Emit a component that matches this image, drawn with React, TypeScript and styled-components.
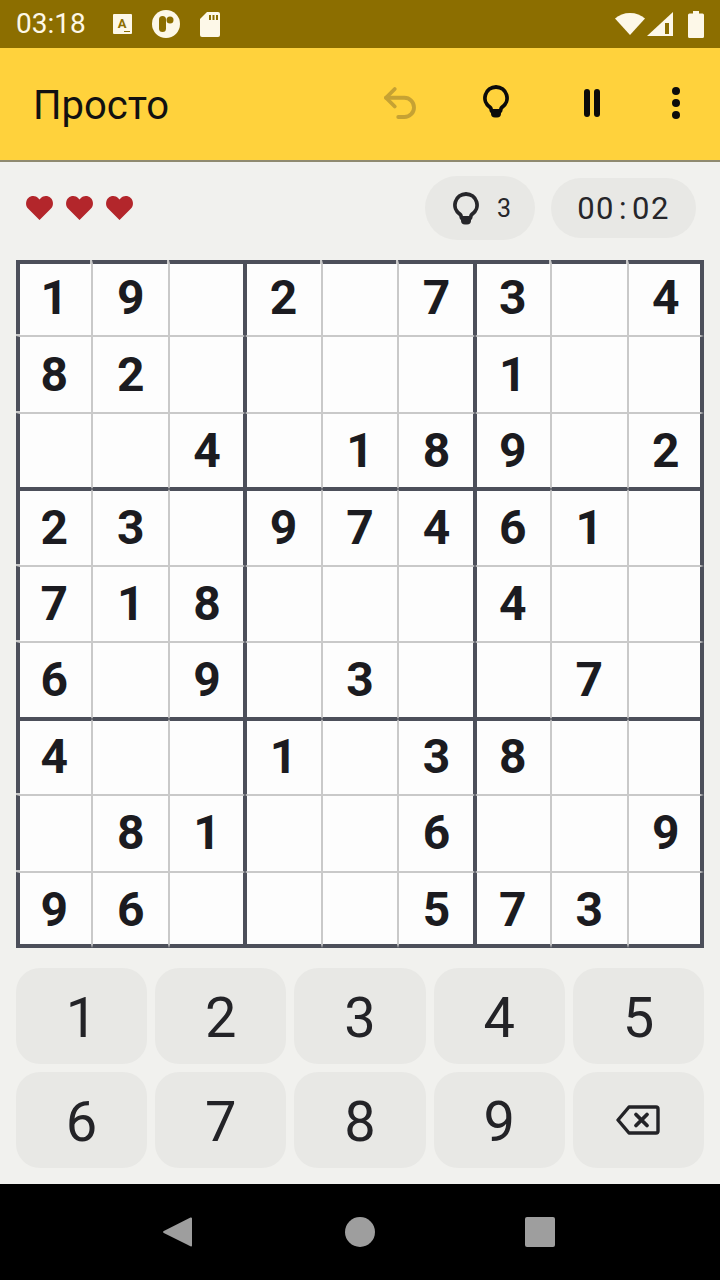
import React from "react";
import styled, { createGlobalStyle, css } from "styled-components";
import { Undo2 } from "lucide-react";

const GlobalStyle = createGlobalStyle`
  html, body {
    margin: 0;
    padding: 0;
    background: #f1f1ee;
  }
  * {
    box-sizing: border-box;
  }
`;

const Screen = styled.div`
  width: 720px;
  height: 1280px;
  display: flex;
  flex-direction: column;
  overflow: hidden;
  background: #f1f1ee;
  font-family: Roboto, "Liberation Sans", sans-serif;
  color: #202024;
`;

const StatusBar = styled.div`
  height: 48px;
  flex: none;
  display: flex;
  align-items: center;
  padding: 0 16px;
  gap: 20px;
  background: #8c6e00;
`;

const Clock = styled.span`
  font-size: 28px;
  line-height: 1;
  color: #fdf8e8;
  margin-right: 7px;
`;

const StatusRight = styled.div`
  margin-left: auto;
  display: flex;
  align-items: center;
  gap: 2px;
`;

const Battery = styled.svg`
  margin-left: 13px;
`;

const AppBar = styled.header`
  height: 114px;
  flex: none;
  display: flex;
  align-items: center;
  padding: 0 8px 2px 33px;
  background: #ffd23c;
  border-bottom: 2px solid #8f8a70;
`;

const Title = styled.h1`
  margin: 4px auto 0 0;
  font-size: 40px;
  font-weight: 400;
  color: #111;
`;

const ActionButton = styled.button<{ $narrow?: boolean }>`
  width: ${(p) => (p.$narrow ? 72 : 96)}px;
  height: 96px;
  padding: 0;
  border: 0;
  background: none;
  display: flex;
  align-items: center;
  justify-content: center;
  color: #0b0b0b;
`;

const UndoIcon = styled(Undo2)`
  color: #c6a233;
`;

const BulbSlot = styled.span`
  display: flex;
  margin-bottom: 4px;
`;

const InfoRow = styled.div`
  flex: none;
  height: 98px;
  display: flex;
  align-items: center;
  padding: 0 24px 6px 26px;
`;

const Hearts = styled.div`
  display: flex;
  gap: 13px;
  margin-right: auto;
`;

const Pill = styled.div<{ $hint?: boolean }>`
  height: ${(p) => (p.$hint ? 64 : 60)}px;
  width: ${(p) => (p.$hint ? 110 : 145)}px;
  margin-left: ${(p) => (p.$hint ? 0 : 16)}px;
  padding-left: ${(p) => (p.$hint ? 4 : 0)}px;
  border-radius: 32px;
  background: #e8e8e5;
  display: flex;
  align-items: center;
  justify-content: center;
  color: #26262a;
`;

const HintCount = styled.span`
  font-size: 25px;
  margin-left: 18px;
`;

const Timer = styled.span`
  font-size: 31px;
  letter-spacing: 1.5px;
`;

const Colon = styled.span`
  margin: 0 4px;
`;

const Board = styled.div`
  flex: none;
  width: 688px;
  height: 688px;
  margin: 0 16px;
  display: grid;
  grid-template-columns: repeat(9, 1fr);
  grid-template-rows: repeat(9, 1fr);
  background: #fdfdfd;
`;

const THICK = "#4c4f5a";
const THIN = "#c9c9c9";

const startWidth = (i: number) => (i === 0 ? 4 : i % 3 === 0 ? 2 : 1);
const endWidth = (i: number) => (i === 8 ? 4 : i % 3 === 2 ? 2 : 1);
const line = (width: number) => `${width}px solid ${width === 1 ? THIN : THICK}`;

// keeps the digit centred in the cell when its two opposite borders differ
const startPad = (i: number) => Math.max(0, endWidth(i) - startWidth(i));
const endPad = (i: number) => Math.max(0, startWidth(i) - endWidth(i));

const Cell = styled.div<{ $row: number; $col: number }>`
  position: relative;
  display: flex;
  align-items: center;
  justify-content: center;
  min-width: 0;
  min-height: 0;
  font-size: 48px;
  font-weight: 700;
  line-height: 1;
  color: #1b1b20;
  border-top: ${(p) => line(startWidth(p.$row))};
  border-bottom: ${(p) => line(endWidth(p.$row))};
  border-left: ${(p) => line(startWidth(p.$col))};
  border-right: ${(p) => line(endWidth(p.$col))};
  padding: ${(p) => startPad(p.$row)}px ${(p) => endPad(p.$col)}px ${(p) => endPad(p.$row)}px ${(p) => startPad(p.$col)}px;

  ${(p) =>
    p.$row === 0 &&
    p.$col % 3 !== 2 &&
    css`
      &::after {
        content: "";
        position: absolute;
        top: -4px;
        right: -1px;
        width: 2px;
        height: 4px;
        background: ${THIN};
      }
    `}

  ${(p) =>
    p.$col === 0 &&
    p.$row % 3 !== 2 &&
    css`
      &::before {
        content: "";
        position: absolute;
        left: -4px;
        bottom: -1px;
        width: 4px;
        height: 2px;
        background: ${THIN};
      }
    `}
`;

const Keypad = styled.div`
  flex: none;
  display: grid;
  grid-template-columns: repeat(5, 1fr);
  grid-auto-rows: 96px;
  gap: 8px;
  padding: 20px 16px 16px;
`;

const Key = styled.button<{ $icon?: boolean }>`
  border: 0;
  padding: ${(p) => (p.$icon ? 0 : "4px 0 0")};
  border-radius: 24px;
  background: #e8e8e5;
  display: flex;
  align-items: center;
  justify-content: center;
  font-family: inherit;
  font-size: 56px;
  font-weight: 400;
  color: #232327;
`;

const NavBar = styled.nav`
  flex: 1;
  background: #000;
  display: flex;
  align-items: center;
  justify-content: center;
  gap: 150px;
  padding-right: 2px;
`;

const NavCircle = styled.div`
  width: 30px;
  height: 30px;
  border-radius: 50%;
  background: #9e9e9e;
`;

const NavSquare = styled.div`
  width: 30px;
  height: 30px;
  border-radius: 2px;
  background: #9e9e9e;
`;

const Bulb = () => (
  <svg width="26" height="33" viewBox="0 0 26 33">
    <path
      d="M13 2a11 11 0 0 1 6.2 20.1c-.8.6-1.2 1.4-1.4 2.4l-.3 1.5h-9l-.3-1.500c-.2-1-.6-1.800-1.400-2.400A11 11 0 0 1 13 2z"
      fill="none"
      stroke="currentColor"
      strokeWidth="3.8"
      strokeLinejoin="round"
    />
    <path d="M8 25h10v3.500a4 4 0 0 1-4 4h-2a4 4 0 0 1-4-4z" fill="currentColor" />
  </svg>
);

const Heart = () => (
  <svg width="27" height="24" viewBox="0 0 27 24">
    <path
      d="M13.500 24 2 12.600C-.7 9.700-.6 4.600 2.300 2 5.200-.6 9.700-.5 12.300 2.200l1.200 1.300 1.200-1.300C17.300-.5 21.800-.6 24.700 2c2.900 2.600 3 7.700.3 10.600z"
      fill="#b3262b"
    />
  </svg>
);

const rows = [
  "19 2 73 4",
  "82    1  ",
  "  4 189 2",
  "23 97461 ",
  "718   4  ",
  "6 9 3  7 ",
  "4  1 38  ",
  " 81  6  9",
  "96   573 ",
];

const App = () => {
  return (
    <Screen>
      <GlobalStyle />
      <StatusBar>
        <Clock>03:18</Clock>
        <svg width="19" height="20" viewBox="0 0 19 20">
          <rect width="19" height="20" rx="1" fill="#fdf8e8" />
          <text x="9" y="14" fontSize="13" fontWeight="700" fontFamily="Roboto, sans-serif" textAnchor="middle" fill="#8c6e00">
            A
          </text>
          <rect x="11" y="17" width="6" height="1" fill="#8c6e00" />
        </svg>
        <svg width="28" height="28" viewBox="0 0 28 28">
          <circle cx="14" cy="14" r="14" fill="#fdf8e8" />
          <rect x="7" y="6" width="7" height="16" rx="3.500" fill="#8c6e00" />
          <circle cx="18" cy="10" r="3.500" fill="#8c6e00" />
        </svg>
        <svg width="20" height="25" viewBox="0 0 20 25">
          <path d="M7 0h11a2 2 0 0 1 2 2v21a2 2 0 0 1-2 2H2a2 2 0 0 1-2-2V7z" fill="#fdf8e8" />
          <path d="M9 3h2v5H9zM12.500 3h2v5h-2zM16 3h2v5h-2z" fill="#8c6e00" />
        </svg>
        <StatusRight>
          <svg width="30" height="24" viewBox="0 0 30 24">
            <path d="M15 23 0 6.500C4 3 9 1 15 1s11 2 15 5.500z" fill="#fdf8e8" />
          </svg>
          <svg width="26" height="24" viewBox="0 0 26 24">
            <path d="M0 24 26 0v24z" fill="#fdf8e8" />
            <path d="M18 11h4v11h-4z" fill="#8c6e00" />
          </svg>
          <Battery width="16" height="27" viewBox="0 0 16 27">
            <path d="M5 0h6v2.500h3.500a1.500 1.500 0 0 1 1.500 1.500v21.500a1.500 1.500 0 0 1-1.500 1.500h-13A1.500 1.500 0 0 1 0 25.500V4a1.500 1.500 0 0 1 1.500-1.500H5z" fill="#fdf8e8" />
          </Battery>
        </StatusRight>
      </StatusBar>

      <AppBar>
        <Title>Просто</Title>
        <ActionButton>
          <UndoIcon size={42} strokeWidth={2.2} />
        </ActionButton>
        <ActionButton>
          <BulbSlot>
            <Bulb />
          </BulbSlot>
        </ActionButton>
        <ActionButton>
          <svg width="16" height="28" viewBox="0 0 16 28">
            <rect width="6" height="28" rx="3" fill="currentColor" />
            <rect x="10" width="6" height="28" rx="3" fill="currentColor" />
          </svg>
        </ActionButton>
        <ActionButton $narrow>
          <svg width="8" height="32" viewBox="0 0 8 32">
            <circle cx="4" cy="4" r="4" fill="currentColor" />
            <circle cx="4" cy="16" r="4" fill="currentColor" />
            <circle cx="4" cy="28" r="4" fill="currentColor" />
          </svg>
        </ActionButton>
      </AppBar>

      <InfoRow>
        <Hearts>
          <Heart />
          <Heart />
          <Heart />
        </Hearts>
        <Pill $hint>
          <Bulb />
          <HintCount>3</HintCount>
        </Pill>
        <Pill>
          <Timer>
            00<Colon>:</Colon>02
          </Timer>
        </Pill>
      </InfoRow>

      <Board>
        {rows.map((row, r) =>
          row.split("").map((ch, c) => (
            <Cell key={`${r}-${c}`} $row={r} $col={c}>
              {ch.trim()}
            </Cell>
          ))
        )}
      </Board>

      <Keypad>
        {[1, 2, 3, 4, 5, 6, 7, 8, 9].map((n) => (
          <Key key={n}>{n}</Key>
        ))}
        <Key $icon>
          <svg width="44" height="30" viewBox="0 0 44 30">
            <path
              d="M13 2h27a2 2 0 0 1 2 2v22a2 2 0 0 1-2 2H13L2 15z"
              fill="none"
              stroke="currentColor"
              strokeWidth="3.400"
              strokeLinejoin="round"
            />
            <path d="M20 9.500l11 11M31 9.500l-11 11" stroke="currentColor" strokeWidth="3.800" strokeLinecap="round" />
          </svg>
        </Key>
      </Keypad>

      <NavBar>
        <svg width="32" height="32" viewBox="0 0 32 32">
          <path d="M28 1.500a1 1 0 0 1 1 1v27a1 1 0 0 1-1.500.8L.8 17a1.200 1.200 0 0 1 0-2L27.500 1.500z" fill="#9e9e9e" />
        </svg>
        <NavCircle />
        <NavSquare />
      </NavBar>
    </Screen>
  );
};

export default App;
